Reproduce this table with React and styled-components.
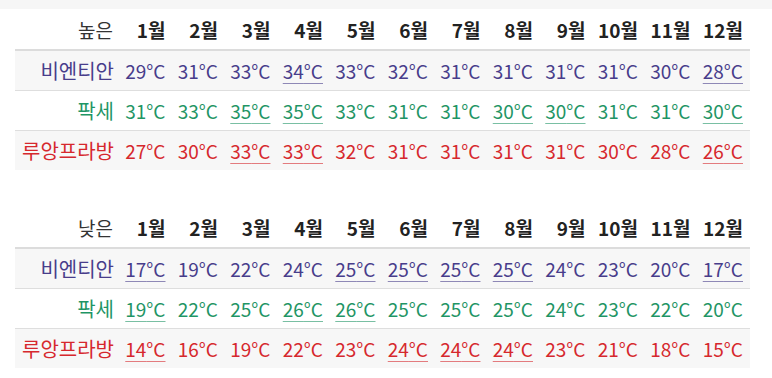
import React from 'react';
import styled, { createGlobalStyle } from 'styled-components';

const GlobalStyle = createGlobalStyle`
  body {
    margin: 0;
    background: #fff;
    font-family: "Noto Sans CJK KR", "Noto Sans", sans-serif;
  }
`;

const MONTHS = ['1월', '2월', '3월', '4월', '5월', '6월', '7월', '8월', '9월', '10월', '11월', '12월'];

const CITIES = [
  { name: '비엔티안', color: '#483d8b' },
  { name: '팍세', color: '#1f9565' },
  { name: '루앙프라방', color: '#d6282d' },
];

const TABLES = [
  {
    title: '높은',
    rows: [
      [29, 31, 33, 34, 33, 32, 31, 31, 31, 31, 30, 28],
      [31, 33, 35, 35, 33, 31, 31, 30, 30, 31, 31, 30],
      [27, 30, 33, 33, 32, 31, 31, 31, 31, 30, 28, 26],
    ],
  },
  {
    title: '낮은',
    rows: [
      [17, 19, 22, 24, 25, 25, 25, 25, 24, 23, 20, 17],
      [19, 22, 25, 26, 26, 25, 25, 25, 24, 23, 22, 20],
      [14, 16, 19, 22, 23, 24, 24, 24, 23, 21, 18, 15],
    ],
  },
];

const Page = styled.div`
  display: flex;
  flex-direction: column;
  gap: 37px;
`;

const TopBand = styled.div`
  height: 9px;
  background: #f6f6f6;
  margin-bottom: -37px;
`;

const Table = styled.table`
  width: 735px;
  margin-left: 15px;
  border-collapse: collapse;
  table-layout: fixed;
  font-size: 19px;
`;

const LabelCol = styled.col`
  width: 105px;
`;

const HeadCell = styled.th`
  height: 40px;
  padding: 0 7px 0 0;
  text-align: right;
  font-weight: ${props => (props.$title ? 400 : 700)};
  color: ${props => (props.$title ? '#333' : '#222')};
  border-bottom: 2px solid #dcdcdc;
  line-height: 1;
  white-space: nowrap;
`;

const Row = styled.tr`
  background: ${props => (props.$striped ? '#f7f7f7' : '#fff')};
  border-top: 1px solid #dedede;
  &:first-child {
    border-top: 0;
  }
`;

const Cell = styled.td`
  height: 39px;
  padding: 0 7px 0 0;
  text-align: right;
  color: ${props => props.$color};
  line-height: 1;
  white-space: nowrap;
`;

const CityCell = styled(Cell)`
  font-size: 20px;
  padding-right: 6px;
`;

const Temp = styled.span`
  text-decoration: ${props => (props.$mark ? 'underline' : 'none')};
  text-decoration-color: ${props => props.$color}99;
  text-decoration-thickness: 1px;
  text-underline-offset: 4px;
`;

function ClimateTable({ title, rows }) {
  return (
    <Table>
      <colgroup>
        <LabelCol />
        {MONTHS.map(m => <col key={m} />)}
      </colgroup>
      <thead>
        <tr>
          <HeadCell $title>{title}</HeadCell>
          {MONTHS.map(m => <HeadCell key={m}>{m}</HeadCell>)}
        </tr>
      </thead>
      <tbody>
        {rows.map((values, i) => {
          const city = CITIES[i];
          const max = Math.max(...values);
          const min = Math.min(...values);
          return (
            <Row key={city.name} $striped={i % 2 === 0}>
              <CityCell $color={city.color}>{city.name}</CityCell>
              {values.map((v, j) => (
                <Cell key={j} $color={city.color}>
                  <Temp $color={city.color} $mark={v === max || v === min}>{v}°C</Temp>
                </Cell>
              ))}
            </Row>
          );
        })}
      </tbody>
    </Table>
  );
}

export default function App() {
  return (
    <>
      <GlobalStyle />
      <Page>
        <TopBand />
        {TABLES.map(t => <ClimateTable key={t.title} title={t.title} rows={t.rows} />)}
      </Page>
    </>
  );
}
